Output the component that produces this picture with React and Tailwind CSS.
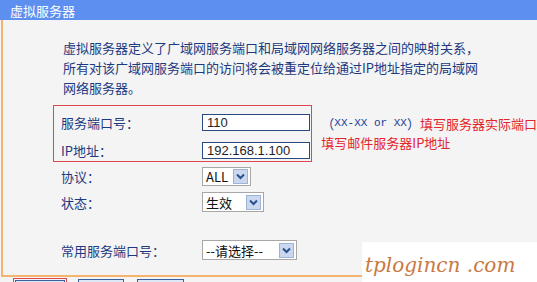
const cjk = { fontFamily: '"Noto Sans CJK SC", "Liberation Sans", sans-serif' };

function Arrow() {
  return (
    <span className="flex h-[15px] w-[15px] items-center justify-center border border-[#9fb4d4] bg-[#c9d8ee]">
      <svg width="9" height="7" viewBox="0 0 9 7">
        <path d="M1 1.5 L4.5 5 L8 1.5" fill="none" stroke="#2b4f8f" strokeWidth="2" />
      </svg>
    </span>
  );
}

function Select({ value, width, height }) {
  return (
    <div
      className={`flex items-center justify-between border border-[#a7a7a7] bg-white pl-[3px] pr-[2px] text-[13px] leading-none text-[#111] ${width} ${height}`}
      style={cjk}
    >
      <span className="whitespace-nowrap">{value}</span>
      <Arrow />
    </div>
  );
}

function Field({ value }) {
  return (
    <div
      className="flex h-[17px] w-[108px] items-center border border-[#284a80] bg-white pl-[4px] text-[13px] leading-none text-[#222]"
      style={{ fontFamily: '"Liberation Sans", Arial, sans-serif' }}
    >
      {value}
    </div>
  );
}

export default function App() {
  return (
    <div className="relative h-[282px] w-[537px] overflow-hidden bg-[#f4f4f4]" style={cjk}>
      {/* title bar */}
      <div className="flex h-[20px] items-center bg-[#5c8ff0] pl-[10px] text-[13px] leading-none text-white">
        虚拟服务器
      </div>

      {/* panel */}
      <div className="ml-[1px] border-b-2 border-l-2 border-[#f5b36e] pb-[15px] pt-[18px] text-[#1d3a80]">
        <p className="pl-[60px] text-[13px] leading-[20px]">
          虚拟服务器定义了广域网服务端口和局域网网络服务器之间的映射关系，
          <br />
          所有对该广域网服务端口的访问将会被重定位给通过IP地址指定的局域网
          <br />
          网络服务器。
        </p>

        <div className="mt-[7px] flex">
          <div className="ml-[50px] flex w-[261px] flex-col gap-[11px] border border-[#e0484f] pb-[2px] pl-[7px] pt-[8px]">
            <div className="flex h-[17px] items-center">
              <span className="w-[141px] text-[13px] leading-none">服务端口号：</span>
              <Field value="110" />
            </div>
            <div className="flex h-[17px] items-center">
              <span className="w-[141px] text-[13px] leading-none">IP地址：</span>
              <Field value="192.168.1.100" />
            </div>
          </div>
          <div className="ml-[9px] flex flex-col whitespace-nowrap pt-[9px] text-[13px] leading-[19px]">
            <div className="flex h-[19px] items-center">
              <span className="text-[#1a3a9a]">（</span>
              <span
                className="text-[11px] text-[#1a3a9a]"
                style={{ fontFamily: '"Liberation Mono", "Courier New", monospace' }}
              >
                XX-XX or XX
              </span>
              <span className="text-[#1a3a9a]">）</span>
              <span className="text-[#e3252c]">填写服务器实际端口</span>
            </div>
            <div className="h-[19px] text-[#e3252c]">填写邮件服务器IP地址</div>
          </div>
        </div>

        <div className="ml-[58px] mt-[5px] flex h-[19px] items-center">
          <span className="w-[141px] text-[13px] leading-none">协议：</span>
          <Select value="ALL" width="w-[49px]" height="h-[19px]" />
        </div>
        <div className="ml-[58px] mt-[6px] flex h-[20px] items-center">
          <span className="w-[141px] text-[13px] leading-none">状态：</span>
          <Select value="生效" width="w-[62px]" height="h-[20px]" />
        </div>
        <div className="ml-[58px] mt-[28px] flex h-[20px] items-center">
          <span className="w-[141px] text-[13px] leading-none">常用服务端口号：</span>
          <Select value="--请选择--" width="w-[95px]" height="h-[20px]" />
        </div>
      </div>

      {/* buttons */}
      <div className="mt-[1px] flex gap-[11px] pl-[13px]">
        <div className="border border-[#e0484f] p-[1px]">
          <div className="h-[20px] w-[50px] border border-[#3a5f9f] bg-[#dde8f7]" />
        </div>
        <div className="mt-[1px] h-[20px] w-[46px] border border-[#3a5f9f] bg-[#dde8f7]" />
        <div className="ml-[2px] mt-[1px] h-[20px] w-[47px] border border-[#3a5f9f] bg-[#dde8f7]" />
      </div>

      {/* watermark */}
      <div className="absolute bottom-0 right-0 flex h-[40px] w-[175px] items-end bg-white pb-[7px] pl-[3px]">
        <span
          className="whitespace-nowrap text-[20px] italic leading-none text-[#c9793f]"
          style={{ fontFamily: '"DejaVu Serif", "Liberation Serif", serif' }}
        >
          tplogincn .com
        </span>
      </div>
    </div>
  );
}
